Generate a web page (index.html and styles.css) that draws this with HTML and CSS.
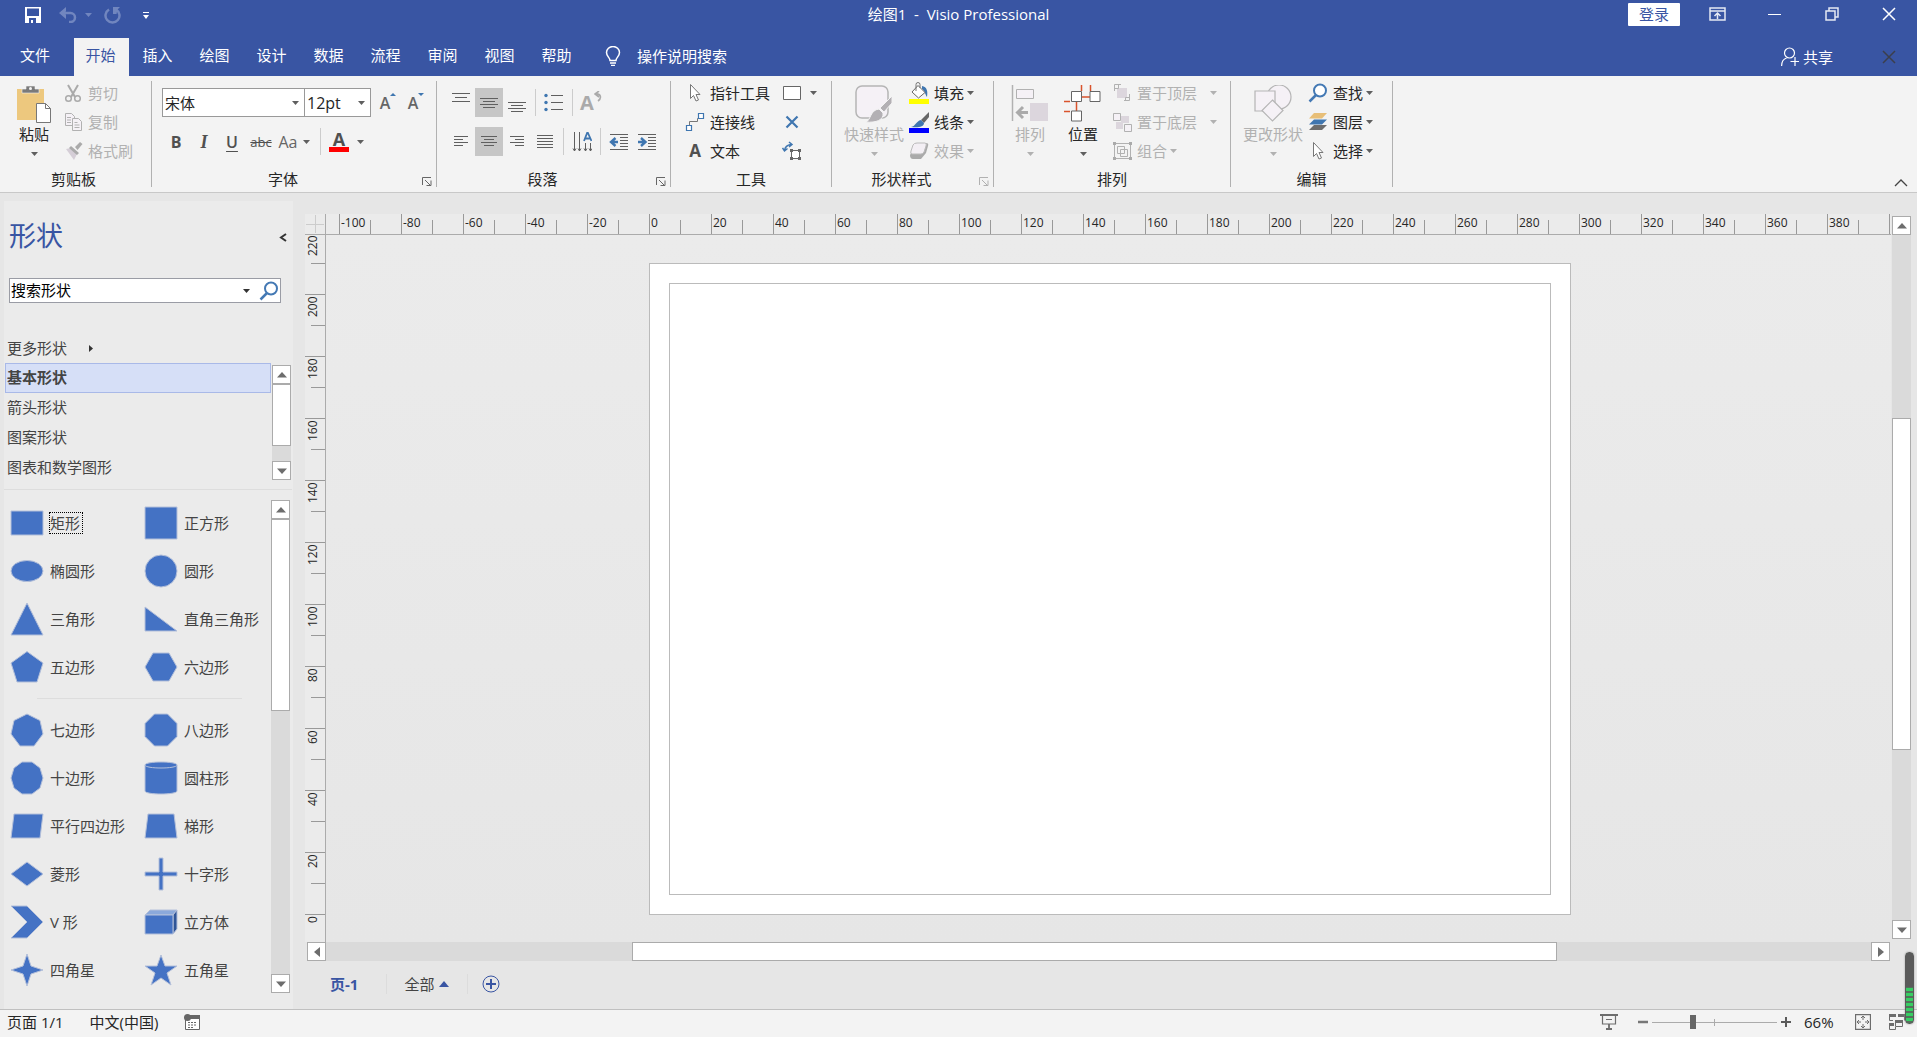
FILE: index.html
```html
<!DOCTYPE html>
<html lang="zh-CN">
<head>
<meta charset="utf-8">
<title>绘图1 - Visio Professional</title>
<link rel="stylesheet" href="styles.css">
</head>
<body>
<svg class="defs" aria-hidden="true">
  <symbol id="caret" viewBox="0 0 7 4"><path d="M0 0h7L3.500 4z" fill="currentColor"/></symbol>
  <symbol id="up" viewBox="0 0 10 6"><path d="M5 0l5 5.500H0z" fill="#6d6d6d"/></symbol>
  <symbol id="down" viewBox="0 0 10 6"><path d="M5 6L0 .5h10z" fill="#6d6d6d"/></symbol>
  <symbol id="launch" viewBox="0 0 10 9"><path d="M.5 8V.5H9M3 3l5 5M9 3.500v5H4.500" fill="none" stroke="currentColor"/></symbol>
  <symbol id="cursor" viewBox="0 0 20 20"><path d="M5.500 1.500v14l3-3 2.500 5.500 2.500-1-2.500-5.500h4z" fill="#fff" stroke="#777"/></symbol>
  <symbol id="lens" viewBox="0 0 20 20"><circle cx="12" cy="7.500" r="6" fill="#fff" stroke="#4479b4" stroke-width="2"/><path d="M8 12l-6.500 6.500" stroke="#4479b4" stroke-width="2.500"/></symbol>
</svg>
<div class="app">
  <header class="titlebar">
    <div class="qat">
      <button class="qa save" aria-label="保存"><svg width="16" height="16" viewBox="0 0 16 16"><path fill-rule="evenodd" fill="#fff" d="M0 0h16v16H0zM2 1.500v7.500h12V1.500zM4 11v5h2v-3h2v3h3v-5z"/></svg></button>
      <button class="qa undo dim" aria-label="撤消"><svg width="18" height="16" viewBox="0 0 18 16"><path d="M2 6h9.500a4.500 4.500 0 0 1 0 9H10" fill="none" stroke="currentColor" stroke-width="2.500"/><path d="M7 0v4l-1 2 1 2v4L0 6z" fill="currentColor"/></svg></button>
      <button class="qa dim" aria-label="撤消列表"><svg width="7" height="4"><use href="#caret"/></svg></button>
      <button class="qa redo dim" aria-label="重复"><svg width="17" height="17" viewBox="0 0 17 17"><path d="M5 2.500A7 7 0 1 0 12 2.500" fill="none" stroke="currentColor" stroke-width="2.500"/><path d="M9 0h7l-2.500 2.500-1 4.500H9z" fill="currentColor"/></svg></button>
      <button class="qa more" aria-label="自定义快速访问工具栏"><svg width="6" height="7" viewBox="0 0 6 7"><path d="M0 0h6v1H0zM0 3h6L3 7z" fill="#fff"/></svg></button>
    </div>
    <h1 class="doc-title">绘图1&nbsp; -&nbsp; Visio Professional</h1>
    <div class="window-tools">
      <button class="login">登录</button>
      <button class="win" aria-label="功能区显示选项"><svg width="17" height="14" viewBox="0 0 17 14"><path d="M1 1h15v12H1zM1 4h15M8.500 12V6.500M5.500 9l3-3 3 3" fill="none" stroke="#e5e9f4" stroke-width="1.500"/></svg></button>
      <button class="win" aria-label="最小化"><svg width="14" height="14" viewBox="0 0 14 14"><path d="M0 7.500h13" stroke="#fff"/></svg></button>
      <button class="win" aria-label="还原"><svg width="14" height="14" viewBox="0 0 14 14"><path d="M1 4h9v9H1zM4 4V1h9v9h-3" fill="none" stroke="#e5e9f4" stroke-width="1.500"/></svg></button>
      <button class="win" aria-label="关闭"><svg width="14" height="14" viewBox="0 0 14 14"><path d="M1 1l12 12M13 1L1 13" stroke="#fff" stroke-width="1.500"/></svg></button>
    </div>
  </header>
  <nav class="tabs">
    <button class="tab file">文件</button>
    <button class="tab active">开始</button>
    <button class="tab">插入</button>
    <button class="tab">绘图</button>
    <button class="tab">设计</button>
    <button class="tab">数据</button>
    <button class="tab">流程</button>
    <button class="tab">审阅</button>
    <button class="tab">视图</button>
    <button class="tab">帮助</button>
    <button class="tell"><svg width="16" height="20" viewBox="0 0 16 20"><path d="M5 14.500c0-3-3.500-4-3.500-8a6.500 6 0 0 1 13 0c0 4-3.500 5-3.500 8z" fill="none" stroke="#fff" stroke-width="1.500"/><path d="M5 17h6M6 19.500h4" stroke="#fff" stroke-width="1.500"/></svg>操作说明搜索</button>
    <button class="share"><svg width="18" height="20" viewBox="0 0 18 20"><circle cx="8.500" cy="6" r="5" fill="none" stroke="#fff" stroke-width="1.200"/><path d="M.6 19c0-4.500 2-7 5-8M14 10v9M9.500 14.500h8.500" fill="none" stroke="#fff" stroke-width="1.200"/></svg>共享</button>
    <button class="win" aria-label="关闭文档"><svg width="14" height="14" viewBox="0 0 14 14"><path d="M1 1l12 12M13 1L1 13" stroke="#3b3f4c" stroke-width="1.500"/></svg></button>
  </nav>

  <section class="ribbon">
    <div class="group g-clip">
      <div class="tools">
        <button class="big">
          <svg width="36" height="40" viewBox="0 0 36 40"><path d="M1 4h27v31H1z" fill="#edc87e"/><path d="M6 8V4h4V1h9v3h4v4z" fill="#7a7a7a" stroke="#f3f3f3" stroke-width=".6"/><circle cx="14.500" cy="3.500" r="1.500" fill="#f3f3f3"/><path d="M20.500 18.500h9l5 5v14h-14z" fill="#fff" stroke="#777"/><path d="M29.500 18.500v5h5" fill="none" stroke="#777"/></svg>
          <span>粘贴</span><svg class="caret" width="7" height="4"><use href="#caret"/></svg></button>
        <div class="col">
          <button class="small off"><svg width="20" height="20" viewBox="0 0 20 20"><g fill="none" stroke="#aaa" stroke-width="1.500"><path d="M5 2l7 12M15 2L8 14" stroke-width="2"/><circle cx="5.500" cy="15.500" r="2.800"/><circle cx="14.500" cy="15.500" r="2.800"/></g></svg>剪切</button>
          <button class="small off"><svg width="20" height="20" viewBox="0 0 20 20"><g fill="#f5f1f6" stroke="#b1b1b1"><path d="M2.500 1.500h6l3 3v9h-9z"/><path d="M9.500 6.500h6l3 3v9h-9z"/><path d="M4 5.500h4M4 8h4M4 10.500h4M11.500 10.500h3M11.500 13h5M11.500 15.500h5"/></g></svg>复制</button>
          <button class="small off"><svg width="20" height="20" viewBox="0 0 20 20"><path d="M3 8l5-1 6 6-3 6z" fill="#d5ced7"/><path d="M8 5l8 7-2 2-8-7zM12 6l5-5 2.500 2-5 6z" fill="#aaa"/></svg>格式刷</button>
        </div>
      </div>
      <div class="group-name"><span>剪贴板</span></div>
    </div>

    <div class="group g-font">
      <div class="tools rows">
        <div class="row">
          <label class="combo name"><select aria-label="字体"><option>宋体</option></select><svg class="caret" width="7" height="4"><use href="#caret"/></svg></label>
          <label class="combo size"><select aria-label="字号"><option>12pt</option></select><svg class="caret" width="7" height="4"><use href="#caret"/></svg></label>
          <button class="cell glyph" aria-label="增大字号">A<svg width="6" height="3" viewBox="0 0 6 3"><path d="M0 3h6L3 0z" fill="#3f76b0"/></svg></button>
          <button class="cell glyph" aria-label="减小字号">A<svg width="6" height="3" viewBox="0 0 6 3"><path d="M0 0h6L3 3z" fill="#3f76b0"/></svg></button>
        </div>
        <div class="row">
          <button class="cell bold">B</button><button class="cell italic">I</button><button class="cell under">U</button>
          <button class="cell strike">abc</button>
          <button class="cell case">Aa<svg class="caret" width="7" height="4"><use href="#caret"/></svg></button>
          <i class="sep"></i>
          <button class="cell color" aria-label="字体颜色"><b>A</b></button><svg class="caret" width="7" height="4"><use href="#caret"/></svg>
        </div>
      </div>
      <div class="group-name"><span>字体</span><button class="launch" aria-label="字体设置"><svg width="10" height="9"><use href="#launch"/></svg></button></div>
    </div>

    <div class="group g-para">
      <div class="tools rows">
        <div class="row">
          <button class="cell" aria-label="顶端对齐"><svg width="20" height="20" viewBox="0 0 20 20"><path d="M1 .5h18M4 4.500h12M1 8.500h18" stroke="#5f5f5f"/></svg></button>
          <button class="cell on" aria-label="中部对齐"><svg width="20" height="20" viewBox="0 0 20 20"><path d="M1 5.500h18M4 8.500h12M1 11.500h18M4 14.500h12" stroke="#5f5f5f"/></svg></button>
          <button class="cell" aria-label="底端对齐"><svg width="20" height="20" viewBox="0 0 20 20"><path d="M1 9.500h18M4 12.500h12M1 15.500h18M4 18.500h12" stroke="#5f5f5f"/></svg></button>
          <i class="sep"></i>
          <button class="cell" aria-label="项目符号"><svg width="20" height="20" viewBox="0 0 20 20"><path d="M7 2.500h12M7 9.500h12M7 16.500h12" stroke="#5f5f5f"/><g fill="#3f76b0"><circle cx="2" cy="2.500" r="1.700"/><circle cx="2" cy="9.500" r="1.700"/><circle cx="2" cy="16.500" r="1.700"/></g></svg></button>
          <i class="sep"></i>
          <button class="cell rotate" aria-label="旋转文本"><b>A</b><svg width="8" height="11" viewBox="0 0 8 11"><path d="M5 0L1 3l4 3M1 3c6-1 7 4 3 7" fill="none" stroke="#aaa" stroke-width="1.600"/></svg></button>
        </div>
        <div class="row">
          <button class="cell" aria-label="左对齐"><svg width="20" height="20" viewBox="0 0 20 20"><path d="M3 4.500h14M3 7.500h9M3 10.500h14M3 13.500h9" stroke="#5f5f5f"/></svg></button>
          <button class="cell on" aria-label="居中"><svg width="20" height="20" viewBox="0 0 20 20"><path d="M2 4.500h16M5 7.500h10M2 10.500h16M5 13.500h10" stroke="#5f5f5f"/></svg></button>
          <button class="cell" aria-label="右对齐"><svg width="20" height="20" viewBox="0 0 20 20"><path d="M3 4.500h14M8 7.500h9M3 10.500h14M8 13.500h9" stroke="#5f5f5f"/></svg></button>
          <button class="cell" aria-label="两端对齐"><svg width="20" height="20" viewBox="0 0 20 20"><path d="M2 3.500h16M2 6.500h16M2 9.500h16M2 12.500h16M2 15.500h16" stroke="#5f5f5f"/></svg></button>
          <i class="sep"></i>
          <button class="cell" aria-label="文字方向"><svg width="20" height="20" viewBox="0 0 20 20"><path d="M2.500 0v19M7.500 0v19M13.500 11v8M18.500 11v8" stroke="#5f5f5f"/><path d="M1 16.500l1.500 2.500L4 16.500M6 16.500L7.500 19 9 16.500M12 16.500l1.500 2.500 1.500-2.500M17 16.500l1.500 2.500 1.500-2.500" fill="none" stroke="#5f5f5f"/><path d="M12 9l3.500-9L19.500 9M13 6.500h5.500" fill="none" stroke="#3f76b0" stroke-width="1.800"/></svg></button>
          <i class="sep"></i>
          <button class="cell" aria-label="减少缩进"><svg width="20" height="20" viewBox="0 0 20 20"><path d="M1 2.500h18M11 5.500h8M11 8.500h8M11 11.500h8M11 14.500h8M1 17.500h18" stroke="#5f5f5f"/><path d="M9 10H3M6.500 6L2 10l4.500 4" fill="none" stroke="#3f76b0" stroke-width="2.400"/></svg></button>
          <button class="cell" aria-label="增加缩进"><svg width="20" height="20" viewBox="0 0 20 20"><path d="M1 2.500h18M11 5.500h8M11 8.500h8M11 11.500h8M11 14.500h8M1 17.500h18" stroke="#5f5f5f"/><path d="M1 10h6M4 6l4.500 4L4 14" fill="none" stroke="#3f76b0" stroke-width="2.400"/></svg></button>
        </div>
      </div>
      <div class="group-name"><span>段落</span><button class="launch" aria-label="段落设置"><svg width="10" height="9"><use href="#launch"/></svg></button></div>
    </div>

    <div class="group g-tools">
      <div class="tools">
        <div class="col wide">
          <button class="small"><svg width="20" height="20"><use href="#cursor"/></svg>指针工具</button>
          <button class="small"><svg width="20" height="20" viewBox="0 0 20 20"><path d="M4.500 13V9.500h8V6.500h3" fill="none" stroke="#777"/><path d="M1.500 13.500h5v5h-5zM13.500 1.500h5v5h-5z" fill="#fff" stroke="#3f76b0" stroke-width="1.200"/></svg>连接线</button>
          <button class="small"><b class="letter">A</b>文本</button>
        </div>
        <div class="col">
          <button class="small" aria-label="矩形"><svg width="20" height="20" viewBox="0 0 20 20"><path d="M1.500 3.500h17v13h-17z" fill="#fff" stroke="#666"/></svg><svg class="caret" width="7" height="4"><use href="#caret"/></svg></button>
          <button class="small" aria-label="连接点"><svg width="20" height="20" viewBox="0 0 20 20"><path d="M4.500 4.500l11 11M15.500 4.500l-11 11" stroke="#3f76b0" stroke-width="2.200"/></svg></button>
          <button class="small" aria-label="文本块"><svg width="20" height="20" viewBox="0 0 20 20"><path d="M2.500 9.500C3 6 5 4 9 3.500M7 1l3 2.500-3 2.500M.5 7l2 3 3-2.500" fill="none" stroke="#3f76b0" stroke-width="1.500"/><path d="M9.500 9.500h8v8h-8z" fill="#fff" stroke="#666"/><path d="M8 8h3v3H8zM16 8h3v3h-3zM8 16h3v3H8zM16 16h3v3h-3z" fill="#666"/></svg></button>
        </div>
      </div>
      <div class="group-name"><span>工具</span></div>
    </div>

    <div class="group g-style">
      <div class="tools">
        <button class="big wide off">
          <svg width="38" height="40" viewBox="0 0 38 40"><rect x="1" y="1" width="32" height="32" rx="6" fill="#f5f1f6" stroke="#b5b5b5" stroke-width="1.500"/><path d="M37 11v7l-8 9-4-4zM24 24l4 4c1 7-7 10-17 9 5-2 4-12 13-13z" fill="#b3b0b4" stroke="#f3f3f3"/></svg>
          <span>快速样式</span><svg class="caret" width="7" height="4"><use href="#caret"/></svg></button>
        <div class="col">
          <button class="small"><svg width="20" height="22" viewBox="0 0 20 22"><path d="M13 4c5 1 6 5 5 11-2-3-2-6-5-8z" fill="#3f76b0"/><path d="M9 3.500l7 7-6.500 5.500L3 10z" fill="#fff" stroke="#666"/><path d="M7 9V2.500a2 2 0 0 1 4 0V6" fill="none" stroke="#777"/><path d="M0 17h20v5H0z" fill="#ff0"/></svg>填充<svg class="caret" width="7" height="4"><use href="#caret"/></svg></button>
          <button class="small"><svg width="20" height="22" viewBox="0 0 20 22"><path d="M20 1v5l-5 6-3-3z" fill="#666"/><path d="M12 9l3 3c0 4-6 5-13 4 5-1 5-6 10-7z" fill="#3f76b0"/><path d="M0 17h20v5H0z" fill="#00f"/></svg>线条<svg class="caret" width="7" height="4"><use href="#caret"/></svg></button>
          <button class="small off"><svg width="20" height="20" viewBox="0 0 20 20"><path d="M8 2h9q3 0 2 3l-2 7-5 6H4q-3 0-3-4z" fill="#aaa"/><path d="M8 2h8q2 0 1 3l-2 6q-1 2-3 2H3q-2 0-1-3l2-6q1-2 4-2z" fill="#f3eff4" stroke="#bbb"/></svg>效果<svg class="caret" width="7" height="4"><use href="#caret"/></svg></button>
        </div>
      </div>
      <div class="group-name"><span>形状样式</span><button class="launch off" aria-label="形状样式设置"><svg width="10" height="9"><use href="#launch"/></svg></button></div>
    </div>

    <div class="group g-arrange">
      <div class="tools">
        <button class="big off">
          <svg width="38" height="40" viewBox="0 0 38 40"><path d="M1.500 0v36" stroke="#b1b1b1" stroke-width="1.500"/><path d="M5.500 4.500h17v9h-17z" fill="#f5f1f6" stroke="#b1b1b1"/><path d="M19 18h18v18H19z" fill="#dcd6dd"/><path d="M17 27.500H8M12 22l-5.500 5.500L12 33" fill="none" stroke="#aaa" stroke-width="3"/></svg>
          <span>排列</span><svg class="caret" width="7" height="4"><use href="#caret"/></svg></button>
        <button class="big place">
          <svg width="38" height="40" viewBox="0 0 38 40"><path d="M17.500 0v6M26.500 0v6M18 12h8M12.500 17v9M0 16.500h6M0 26.500h6" stroke="#d9532c" stroke-width="1.500"/><path d="M7.500 6.500h10v10h-10zM26 6.500h10v10H26zM7.500 26h10v10h-10z" fill="#fff" stroke="#666"/></svg>
          <span>位置</span><svg class="caret" width="7" height="4"><use href="#caret"/></svg></button>
        <div class="col">
          <button class="small off far"><svg width="20" height="20" viewBox="0 0 20 20"><path d="M5 5h10v10H5z" fill="#dcd6dd"/><path d="M2.500 8V1.500H9M2.500 5.500h4v-4M17.500 11v6.500H12M17.500 14.500h-4v3" fill="none" stroke="#b1b1b1"/></svg>置于顶层<svg class="caret" width="7" height="4"><use href="#caret"/></svg></button>
          <button class="small off far"><svg width="20" height="20" viewBox="0 0 20 20"><path d="M9 4h8v7H9zM4 10h7v7H4z" fill="#dcd6dd"/><path d="M1.500 1.500h7v7h-7zM12.500 12.500h7v7h-7z" fill="#f5f1f6" stroke="#b1b1b1"/></svg>置于底层<svg class="caret" width="7" height="4"><use href="#caret"/></svg></button>
          <button class="small off"><svg width="20" height="20" viewBox="0 0 20 20"><path d="M2.500 2.500h16v15h-16zM5.500 5.500h7v7h-7zM8.500 8.500h7v7h-7z" fill="none" stroke="#b1b1b1"/><path d="M1 1h3v3H1zM17 1h3v3h-3zM1 16h3v3H1zM17 16h3v3h-3z" fill="#aaa"/></svg>组合<svg class="caret" width="7" height="4"><use href="#caret"/></svg></button>
        </div>
      </div>
      <div class="group-name"><span>排列</span></div>
    </div>

    <div class="group g-edit">
      <div class="tools">
        <button class="big wide off">
          <svg width="38" height="40" viewBox="0 0 38 40"><g fill="#f5f1f6" stroke="#b5b5b5" stroke-width="1.200"><circle cx="25" cy="12" r="12"/><path d="M1 6h20v20H1z"/><path d="M18.500 15l10.500 10.500L18.500 36 8 25.500z"/></g></svg>
          <span>更改形状</span><svg class="caret" width="7" height="4"><use href="#caret"/></svg></button>
        <div class="col">
          <button class="small"><svg width="20" height="20"><use href="#lens"/></svg>查找<svg class="caret" width="7" height="4"><use href="#caret"/></svg></button>
          <button class="small"><svg width="20" height="20" viewBox="0 0 20 20"><path d="M6 13h13l-5 5H1z" fill="#6d6d6d"/><path d="M6 7.500h13l-5 5H1z" fill="#3f76b0"/><path d="M6 1h13l-5 5.500H1z" fill="#e8bf78"/></svg>图层<svg class="caret" width="7" height="4"><use href="#caret"/></svg></button>
          <button class="small"><svg width="20" height="20"><use href="#cursor"/></svg>选择<svg class="caret" width="7" height="4"><use href="#caret"/></svg></button>
        </div>
      </div>
      <div class="group-name"><span>编辑</span></div>
    </div>
    <button class="collapse" aria-label="折叠功能区"><svg width="14" height="8" viewBox="0 0 14 8"><path d="M1 7l6-6 6 6" fill="none" stroke="#444" stroke-width="1.300"/></svg></button>
  </section>

  <main class="work">
    <aside class="panel">
      <div class="panel-head"><h2>形状</h2><button aria-label="折叠"><svg width="8" height="9" viewBox="0 0 8 9"><path d="M7 1L2 4.500 7 8" fill="none" stroke="#333" stroke-width="2"/></svg></button></div>
      <div class="search"><input type="text" value="搜索形状" aria-label="搜索形状"><svg class="caret" width="7" height="4"><use href="#caret"/></svg><button aria-label="搜索"><svg width="20" height="20"><use href="#lens"/></svg></button></div>
      <button class="more-shapes">更多形状<svg width="4" height="7" viewBox="0 0 4 7"><path d="M0 0l4 3.500L0 7z" fill="#333"/></svg></button>
      <div class="stencils">
        <ul>
          <li><button class="picked">基本形状</button></li>
          <li><button>箭头形状</button></li>
          <li><button>图案形状</button></li>
          <li><button>图表和数学图形</button></li>
        </ul>
        <div class="vbar"><button aria-label="向上"><svg width="10" height="6"><use href="#up"/></svg></button><div class="track"><div class="thumb"></div></div><button aria-label="向下"><svg width="10" height="6"><use href="#down"/></svg></button></div>
      </div>
      <div class="gallery">
        <div class="shapes">
          <ul class="shape-grid">
            <li><svg viewBox="0 0 34 34"><path d="M1 5h32v24H1z"/></svg><span class="focus">矩形</span></li>
            <li><svg viewBox="0 0 34 34"><path d="M1 1h32v32H1z"/></svg><span>正方形</span></li>
            <li><svg viewBox="0 0 34 34"><ellipse cx="17" cy="17" rx="16" ry="10.500"/></svg><span>椭圆形</span></li>
            <li><svg viewBox="0 0 34 34"><circle cx="17" cy="17" r="16"/></svg><span>圆形</span></li>
            <li><svg viewBox="0 0 34 34"><path d="M17 1l16 32H1z"/></svg><span>三角形</span></li>
            <li><svg viewBox="0 0 34 34"><path d="M1 5v24h32z"/></svg><span>直角三角形</span></li>
            <li><svg viewBox="0 0 34 34"><path d="M17 1.500l16 11.500-6 19H7L1 13z"/></svg><span>五边形</span></li>
            <li><svg viewBox="0 0 34 34"><path d="M9 3h16l8 14-8 14H9L1 17z"/></svg><span>六边形</span></li>
          </ul>
          <ul class="shape-grid">
            <li><svg viewBox="0 0 34 34"><path d="M17 1l13 6.500L33 21l-9 12H10L1 21 4 7.500z"/></svg><span>七边形</span></li>
            <li><svg viewBox="0 0 34 34"><path d="M10.500 1h13L33 10.500v13L23.500 33h-13L1 23.500v-13z"/></svg><span>八边形</span></li>
            <li><svg viewBox="0 0 34 34"><path d="M12 1h10l8 6 3 10-3 10-8 6H12l-8-6L1 17 4 7z"/></svg><span>十边形</span></li>
            <li><svg viewBox="0 0 34 34"><path d="M1 4c0-4 32-4 32 0v26c0 4-32 4-32 0z"/><path d="M1 4c0 4 32 4 32 0"/></svg><span>圆柱形</span></li>
            <li><svg viewBox="0 0 34 34"><path d="M4 5h29l-3 24H1z"/></svg><span>平行四边形</span></li>
            <li><svg viewBox="0 0 34 34"><path d="M4 5h26l3 24H1z"/></svg><span>梯形</span></li>
            <li><svg viewBox="0 0 34 34"><path d="M17 5l16 12-16 12L1 17z"/></svg><span>菱形</span></li>
            <li><svg viewBox="0 0 34 34"><path d="M15 1h4v14h14v4H19v14h-4V19H1v-4h14z"/></svg><span>十字形</span></li>
            <li><svg viewBox="0 0 34 34"><path d="M1 1h16l16 16-16 16H1l16-16z"/></svg><span>V 形</span></li>
            <li><svg viewBox="0 0 34 34"><path class="lid" d="M1 10l5-5h27l-4 5z"/><path class="side" d="M29 10l4-5v19l-4 5z"/><path d="M1 10h28v19H1z"/></svg><span>立方体</span></li>
            <li><svg viewBox="0 0 34 34"><path d="M17 1l4 12 12 4-12 4-4 12-4-12-12-4 12-4z"/></svg><span>四角星</span></li>
            <li><svg viewBox="0 0 34 34"><path d="M17 2l4 11h12l-10 7 4 12-10-7-10 7 4-12-10-7h12z"/></svg><span>五角星</span></li>
          </ul>
        </div>
        <div class="vbar"><button aria-label="向上"><svg width="10" height="6"><use href="#up"/></svg></button><div class="track"><div class="thumb"></div></div><button aria-label="向下"><svg width="10" height="6"><use href="#down"/></svg></button></div>
      </div>
    </aside>

    <section class="drawing">
      <div class="corner"></div>
      <div class="hruler"><span>-100</span><span>-80</span><span>-60</span><span>-40</span><span>-20</span><span>0</span><span>20</span><span>40</span><span>60</span><span>80</span><span>100</span><span>120</span><span>140</span><span>160</span><span>180</span><span>200</span><span>220</span><span>240</span><span>260</span><span>280</span><span>300</span><span>320</span><span>340</span><span>360</span><span>380</span><span></span></div>
      <div class="vruler"><span>220</span><span>200</span><span>180</span><span>160</span><span>140</span><span>120</span><span>100</span><span>80</span><span>60</span><span>40</span><span>20</span><span>0</span></div>
      <div class="canvas"><div class="sheet"><div class="margin"></div></div></div>
      <div class="vbar main-v"><button aria-label="向上"><svg width="10" height="6"><use href="#up"/></svg></button><div class="track"><div class="thumb"></div></div><button aria-label="向下"><svg width="10" height="6"><use href="#down"/></svg></button></div>
      <div class="hbar"><button aria-label="向左"><svg width="6" height="10" viewBox="0 0 6 10"><path d="M6 0v10L0 5z" fill="#6d6d6d"/></svg></button><div class="track"><div class="thumb"></div></div><button aria-label="向右"><svg width="6" height="10" viewBox="0 0 6 10"><path d="M0 0v10l6-5z" fill="#6d6d6d"/></svg></button></div>
      <div class="pages">
        <button class="page-tab">页-1</button>
        <button class="all">全部<svg width="10" height="6" viewBox="0 0 10 6"><path d="M5 0l5 6H0z" fill="#3955a3"/></svg></button>
        <button class="add" aria-label="插入页"><svg width="18" height="18" viewBox="0 0 18 18"><circle cx="9" cy="9" r="8" fill="none" stroke="#3955a3"/><path d="M9 4v10M4 9h10" stroke="#3955a3" stroke-width="2"/></svg></button>
      </div>
    </section>
  </main>

  <footer class="status">
    <span>页面 1/1</span><span>中文(中国)</span>
    <button aria-label="宏录制"><svg width="16" height="16" viewBox="0 0 16 16"><path d="M1.500 4v11.500h14V3H5" fill="#fff" stroke="#666"/><path d="M6 1h10v4H6z" fill="#666"/><circle cx="3.500" cy="3.500" r="3.500" fill="#666"/><path d="M4 8.500h2M7 8.500h2M10 8.500h2M4 11h2M7 11h2M10 11h2M4 13.500h2M7 13.500h2" stroke="#666"/></svg></button>
    <div class="zoom">
      <button class="present" aria-label="演示模式"><svg width="18" height="16" viewBox="0 0 18 16"><path d="M0 1h18M9 10v5M6 15h6" stroke="#6d6d6d" stroke-width="1.800"/><path d="M2.500 1v9h13V1M6 5.500h6" fill="none" stroke="#6d6d6d" stroke-width="1.200"/></svg></button>
      <button class="step" aria-label="缩小"><svg width="10" height="10" viewBox="0 0 10 10"><path d="M0 5h10" stroke="#777" stroke-width="2.500"/></svg></button>
      <input type="range" min="0" max="100" value="32" aria-label="缩放">
      <button class="step" aria-label="放大"><svg width="10" height="10" viewBox="0 0 10 10"><path d="M0 5h10M5 0v10" stroke="#5a5a5a" stroke-width="2"/></svg></button>
      <span class="percent">66%</span>
      <button class="fit" aria-label="调整页面以适合窗口"><svg width="16" height="16" viewBox="0 0 16 16"><path d="M.5.5h15v15H.5z" fill="none" stroke="#6d6d6d" stroke-width="1.300"/><path d="M8 2v4M8 10v4M2 8h4M10 8h4M6 4l2-2 2 2M6 12l2 2 2-2M4 6L2 8l2 2M12 6l2 2-2 2" fill="none" stroke="#6d6d6d"/></svg></button>
      <button aria-label="切换窗口"><svg width="16" height="16" viewBox="0 0 16 16"><path d="M0 0h7v3H0zM9 0h7v3H9zM6 6h8v3H6zM0 9h5v3H0z" fill="#6d6d6d"/><path d="M.5 1v5.500H4M15.500 1v5.500M6.500 7v5.500h7V7M.5 10v5.500h6V13" fill="none" stroke="#6d6d6d"/></svg></button>
    </div>
  </footer>
  <div class="meter"></div>
</div>
</body>
</html>
```
FILE: styles.css
```css
* { box-sizing: border-box; }
body {
  margin: 0;
  font-family: "Open Sans", "Noto Sans CJK SC", sans-serif;
  font-size: 15px;
  line-height: 20px;
  color: #262626;
}
button, input, select {
  margin: 0;
  padding: 0;
  border: 0;
  background: none;
  font: inherit;
  color: inherit;
}
button { white-space: nowrap; }
ul { list-style: none; margin: 0; padding: 0; }
svg { display: block; flex: none; }
.defs { position: absolute; width: 0; height: 0; }
.app {
  position: relative;
  display: flex;
  flex-direction: column;
  height: 100vh;
  overflow: hidden;
  background: #e6e6e6;
}

/* Title bar */
.titlebar {
  display: grid;
  grid-template-columns: 1fr auto 1fr;
  align-items: center;
  flex: none;
  height: 38px;
  padding-bottom: 10px;
  background: #3955a3;
  color: #fff;
}
.qat { display: flex; align-items: center; padding: 2px 0 0 25px; }
.save { margin-right: 18px; }
.undo { margin-right: 8px; }
.redo { margin: 0 22px 0 12px; }
.dim { color: #7186bf; }
.doc-title { margin: 0; font-size: 15px; font-weight: 400; }
.window-tools { display: flex; justify-content: flex-end; align-items: center; }
.login {
  width: 52px;
  height: 23px;
  margin-right: 9px;
  background: #fff;
  color: #3955a3;
  border-radius: 1px;
}
.win { display: grid; place-items: center; width: 57px; height: 28px; }

/* Ribbon tabs */
.tabs {
  display: flex;
  align-items: center;
  gap: 2px;
  height: 38px;
  flex: none;
  background: #3955a3;
  color: #fff;
}
.tab { width: 55px; height: 38px; padding: 0 2px 5px 0; }
.tab.file { width: 72px; }
.tab.active { background: #f3f3f3; color: #3955a3; }
.tell, .share { display: flex; align-items: center; }
.tell { gap: 16px; margin-left: 18px; padding-bottom: 2px; }
.share { gap: 4px; margin: 0 25px 0 auto; }

/* Ribbon */
.ribbon {
  display: flex;
  flex: none;
  height: 117px;
  padding: 5px 0;
  background: #f3f3f3;
  border-bottom: 1px solid #c8c8c8;
}
.group {
  display: flex;
  flex-direction: column;
  min-width: 152px;
  border-right: 1px solid #b1b1b1;
}
.tools { display: flex; gap: 3px; height: 84px; padding-left: 12px; }
.tools.rows { flex-direction: column; gap: 0; padding: 2px 0 0 10px; }
.group-name { display: flex; height: 22px; align-items: flex-end; }
.group-name span { flex: 1; text-align: center; line-height: 16px; }
.launch { width: 22px; padding: 0 0 1px 8px; color: #666; }
.g-clip .tools { gap: 5px; padding-left: 10px; }
.g-clip span { padding-right: 4px; }
.g-clip .big span { padding: 0; }
.g-font { width: 285px; }
.g-para { width: 234px; }
.g-tools { width: 161px; }
.g-tools .tools { padding-left: 14px; }
.g-style { width: 162px; }
.g-style .tools, .g-edit .tools { gap: 4px; padding-left: 11px; }
.g-arrange { width: 237px; }
.g-edit { width: 162px; }
.big {
  display: flex;
  flex-direction: column;
  align-items: center;
  width: 48px;
  padding-top: 4px;
}
.big.place { width: 52px; }
.big.wide { width: 62px; }
.big span { line-height: 18px; }
.big .caret { margin-top: 9px; }
.col { margin-top: -2px; }
.small { display: flex; align-items: center; gap: 5px; height: 29px; padding-bottom: 1px; }
.small .caret { margin-left: -2px; }
.small.far .caret { margin-left: 8px; }
.letter { width: 20px; text-align: center; font-size: 17px; color: #505050; }
.col.wide { width: 94px; }
.g-tools .col + .col .caret { margin-left: 3px; }
.caret { color: #5f5f5f; }
.off, .off .caret { color: #b1b1b1; }
.row { display: flex; align-items: center; height: 39px; }
.combo {
  display: flex;
  align-items: center;
  height: 29px;
  padding-right: 5px;
  background: #fff;
  border: 1px solid #999;
}
.combo.name { width: 143px; }
.combo.size { width: 67px; margin: 0 3px 0 -1px; font-size: 16px; }
.combo select { flex: 1; min-width: 0; appearance: none; padding-left: 2px; }
.cell {
  display: flex;
  align-items: center;
  justify-content: center;
  width: 28px;
  height: 29px;
  color: #505050;
}
.cell.on { background: #c6c6c6; }
.sep { width: 1px; height: 27px; margin: 0 4px; background: #ccc; }
.glyph { font-size: 16px; color: #666; font-weight: 600; }
.glyph svg { align-self: flex-start; margin-top: 5px; }
.bold { font-size: 16px; font-weight: 700; }
.italic { font-family: "Liberation Serif", serif; font-style: italic; font-weight: 700; font-size: 18px; }
.under { font-size: 16px; font-weight: 600; text-decoration: underline; text-underline-offset: 3px; }
.strike { width: 30px; font-size: 13px; text-decoration: line-through; }
.case { width: 36px; gap: 5px; margin-right: 4px; font-size: 16px; color: #666; }
.color { height: 20px; margin-right: 4px; }
.color b { width: 20px; height: 20px; line-height: 15px; font-size: 18px; border-bottom: 5px solid #f00; text-align: center; }
.rotate { color: #aaa; font-size: 20px; }
.rotate svg { align-self: flex-start; margin-top: 3px; }
.collapse { align-self: flex-end; margin: 0 9px 0 auto; }

/* Shapes panel */
.work { display: flex; flex: 1; min-height: 0; }
.panel {
  display: flex;
  flex-direction: column;
  flex: none;
  width: 289px;
  margin: 8px 0 0 4px;
  background: #ebebeb;
  color: #444;
}
.panel-head { display: flex; justify-content: space-between; align-items: center; padding: 15px 6px 0 5px; }
.panel-head button { padding-top: 2px; }
.panel-head h2 { margin: 0; font-size: 27px; line-height: 40px; font-weight: 400; color: #3955a3; }
.search {
  display: flex;
  align-items: center;
  height: 25px;
  margin: 22px 12px 0 5px;
  padding: 0 1px;
  background: #fff;
  border: 1px solid #9a9ca5;
  color: #000;
}
.search input { flex: 1; min-width: 0; padding-bottom: 2px; }
.search .caret { margin-right: 9px; color: #333; }
.more-shapes { display: flex; align-items: center; align-self: flex-start; gap: 22px; margin: 35px 0 5px 3px; }
.stencils { display: flex; gap: 1px; padding: 0 1px 6px 1px; border-bottom: 1px solid #ddd; margin-right: 1px; }
.stencils ul { flex: 1; }
.stencils li button { width: 100%; height: 30px; padding: 0 0 2px 1px; text-align: left; border: 1px solid transparent; }
.stencils .picked { background: #d6dff7; border-color: #a9b9e8; font-weight: 700; }
.stencils .vbar { margin: 2px 0 0; height: 115px; }
.stencils .thumb { height: 62px; }
.gallery { display: flex; flex: 1; min-height: 0; padding: 10px 3px 16px 6px; }
.shapes { flex: 1; min-width: 0; margin-top: -1px; }
.shape-grid { display: grid; grid-template-columns: 134px 1fr; grid-auto-rows: 48px; }
.shape-grid + .shape-grid { position: relative; margin-top: 7px; padding-top: 8px; }
.shape-grid + .shape-grid::before { content: ""; position: absolute; top: 0; left: 27px; width: 205px; height: 1px; background: #ddd; }
.shape-grid li { display: flex; align-items: center; gap: 5px; white-space: nowrap; }
.shape-grid svg { width: 34px; height: 34px; fill: #4472c4; stroke: #b4c0da; stroke-width: 1; }
.shape-grid .lid { fill: #8ba9db; }
.shape-grid .side { fill: #2f5597; }
.shape-grid span { border: 1px solid transparent; }
.shape-grid .focus { border: 1px dotted #000; padding-right: 2px; }
.gallery .thumb { height: 192px; }

/* Scroll bars */
.vbar { display: flex; flex-direction: column; flex: none; width: 19px; }
.hbar { display: flex; height: 19px; }
.vbar button, .hbar button {
  display: grid;
  place-items: center;
  flex: none;
  width: 19px;
  height: 19px;
  background: #fff;
  border: 1px solid #ababab;
}
.track { flex: 1; min-height: 0; min-width: 0; background: #dadada; }
.thumb { background: #fff; border: 1px solid #ababab; }

/* Drawing window */
.drawing {
  display: grid;
  flex: 1;
  min-width: 0;
  grid-template-columns: 21px 1fr 20px;
  grid-template-rows: 21px 1fr 19px 48px;
  margin: 21px 6px 0 12px;
}
.corner {
  background:
    linear-gradient(#ccc, #ccc) 50% 50% / 1px 18px no-repeat,
    linear-gradient(#ccc, #ccc) 50% 50% / 18px 1px no-repeat,
    #ebebeb;
  border: solid #ababab;
  border-width: 0 1px 1px 0;
}
.hruler {
  display: flex;
  overflow: hidden;
  padding-left: 13px;
  background: #ebebeb;
  border-bottom: 1px solid #ababab;
  font-size: 12px;
  line-height: 17px;
}
.hruler span {
  flex: none;
  width: 62px;
  padding-left: 1px;
  border-left: 1px solid #999;
  background: linear-gradient(#999, #999) 30px 6px / 1px 14px no-repeat;
}
.vruler {
  overflow: hidden;
  min-height: 0;
  background: #ebebeb;
  border-right: 1px solid #ababab;
  font-size: 12px;
  line-height: 16px;
}
.vruler span {
  display: block;
  width: 20px;
  height: 62px;
  padding: 0 0 1px 2px;
  writing-mode: vertical-rl;
  transform: rotate(180deg);
  text-align: end;
  border-bottom: 1px solid #999;
  background: linear-gradient(#999, #999) 0 30px / 14px 1px no-repeat;
}
.vruler span:first-child { height: 59px; border-bottom: 0; padding-bottom: 0; }
.canvas { overflow: hidden; min-height: 0; min-width: 0; padding: 28px 0 0 323px; background: linear-gradient(#ebebeb, #e6e6e6); }
.sheet { width: 922px; height: 652px; padding: 19px; background: #fff; border: 1px solid #bbb; }
.margin { height: 100%; border: 1px solid #bbb; }
.main-v { justify-self: end; margin: 2px 0 3px; grid-row: 1 / 3; grid-column: 3; }
.main-v .track { padding-top: 183px; }
.main-v .thumb { height: 332px; }
.hbar { grid-column: 1 / 3; margin: 0 1px 0 2px; }
.hbar .track { padding-left: 306px; }
.hbar .thumb { width: 925px; height: 19px; }
.pages { display: flex; align-items: center; grid-column: 1 / 4; padding: 0 0 2px 25px; }
.page-tab { padding-right: 28px; color: #3955a3; font-weight: 700; }
.all { display: flex; align-items: center; gap: 5px; padding: 0 18px 0 17px; border: solid #dcdcdc; border-width: 0 1px; color: #444; }
.add { padding-left: 14px; }

/* Status bar */
.status {
  display: flex;
  align-items: center;
  gap: 26px;
  flex: none;
  height: 28px;
  padding: 0 12px 3px 7px;
  background: #f3f3f3;
  border-top: 1px solid #c0c0c0;
}
.zoom { display: flex; align-items: center; margin-left: auto; }
.present { margin-right: 20px; }
.zoom input {
  appearance: none;
  width: 125px;
  height: 16px;
  margin: 0 4px;
  background:
    linear-gradient(#ababab, #ababab) 50% 50% / 1px 7px no-repeat,
    linear-gradient(#ababab, #ababab) 50% 50% / 100% 1px no-repeat;
}
.zoom input::-webkit-slider-thumb { appearance: none; width: 6px; height: 14px; background: #666; }
.percent { width: 64px; padding-left: 13px; }
.fit { margin-right: 18px; }

/* Floating level meter */
.meter {
  position: absolute;
  right: 3px;
  bottom: 13px;
  width: 9px;
  height: 72px;
  border: 1px solid #5a5a5a;
  border-radius: 4px;
  background: linear-gradient(#5a5a5a 34px, transparent 34px), repeating-linear-gradient(#36cf63 0 3px, #55705c 3px 5px);
  box-shadow: 0 0 2px #999;
}
```
